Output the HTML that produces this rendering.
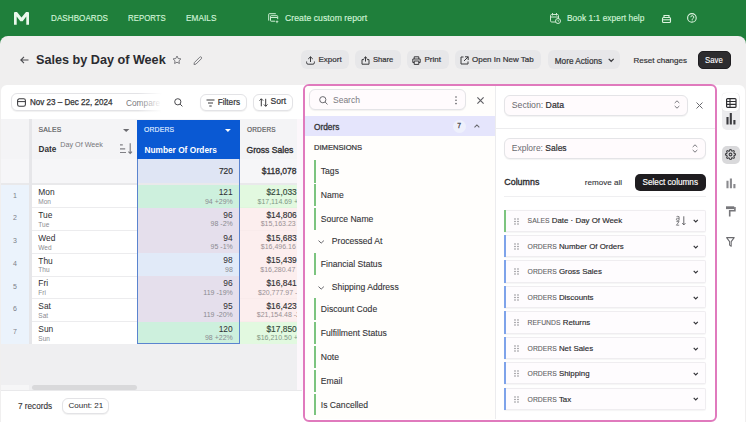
<!DOCTYPE html>
<html><head><meta charset="utf-8">
<style>
*{box-sizing:border-box;margin:0;padding:0}
html,body{width:746px;height:422px;overflow:hidden;background:#1f7f3b;font-family:"Liberation Sans",sans-serif;color:#2e2e31}
.a{position:absolute;white-space:nowrap;transform-origin:0 0}
svg{position:absolute;overflow:visible}
#hdr{position:absolute;left:0;top:0;width:746px;height:36px;background:#1f7f3b}
.nav{color:#d2f4d8;font-size:8px;letter-spacing:0.05px;-webkit-text-stroke:0.15px #d2f4d8}
#main{position:absolute;left:0;top:36px;width:746px;height:386px;background:#f0efef;border-radius:8px 8px 0 0}
.btn{position:absolute;height:19px;border-radius:6px;background:#e7e7e9}
.bt{font-size:8px;color:#333336;-webkit-text-stroke:0.2px #333336}
#panel{position:absolute;left:1.4px;top:85px;width:743.2px;height:337px;background:#fff;border-radius:6px 6px 0 0}
.pill{position:absolute;border:1px solid #e3e3e6;border-radius:6px;background:#fff;box-shadow:0 1px 1px rgba(0,0,0,0.06)}
.th{background:#f4f4f6}
.cap{font-size:6.8px;color:#5c5c61;letter-spacing:0.2px;-webkit-text-stroke:0.2px currentColor}
.num{font-size:8px;color:#2e2e31;text-align:right}
.sub{font-size:6px;color:#8a8a90}
.li{font-size:8.6px;color:#333336;-webkit-text-stroke:0.1px currentColor}
.gbar{position:absolute;left:314px;width:2px;background:#7cc47f}
.card{position:absolute;left:504px;width:201.5px;height:22.3px;border:1px solid #efedf0;border-left:none;background:#fefcfe;border-radius:0 2px 2px 0;box-shadow:0 0.5px 1px rgba(0,0,0,0.04)}
.card .bar{position:absolute;left:0;top:-1px;bottom:-1px;width:2px;background:#7ea3ea}
.ck{font-size:6.8px;color:#5f5f64;-webkit-text-stroke:0.1px currentColor}
.cv{font-size:7.9px;color:#2b2b2e;-webkit-text-stroke:0.15px currentColor}
</style></head><body>
<div id="hdr">
  <!-- M logo -->
  <svg style="left:14.3px;top:12px" width="15" height="13" viewBox="0 0 15 13"><path d="M0 12.8V1Q0 0 1 0H3L7.5 5.6 12 0H14Q15 0 15 1V12.8H12.3V4.4L8.7 9.3H6.3L2.7 4.4V12.8Z" fill="#eaf8ec"/></svg>
  <div class="a nav" style="left:50.7px;top:12.5px;font-size:8.6px;transform:scaleX(0.94)">DASHBOARDS</div>
  <div class="a nav" style="left:127.7px;top:12.5px;font-size:8.6px;transform:scaleX(0.905)">REPORTS</div>
  <div class="a nav" style="left:185.6px;top:12.5px;font-size:8.6px;transform:scaleX(0.96)">EMAILS</div>
  <svg style="left:268px;top:13px" width="12" height="11" viewBox="0 0 12 11"><path d="M0.7 7.6V1.3Q0.7 0.7 1.3 0.7H7.8" fill="none" stroke="#cfeed5" stroke-width="1"/><path d="M7 8.2H3.1Q2.5 8.2 2.5 7.6V3.3Q2.5 2.7 3.1 2.7H9.1Q9.7 2.7 9.7 3.3V6.2" fill="none" stroke="#cfeed5" stroke-width="1"/><path d="M2.5 4.5H9.7" stroke="#cfeed5" stroke-width="1"/><path d="M9 6.9L9.5 8.2 10.8 8.7 9.5 9.2 9 10.5 8.5 9.2 7.2 8.7 8.5 8.2z" fill="#d6f3db"/></svg>
  <div class="a nav" style="left:284.5px;top:12.5px;font-size:8.9px;transform:scaleX(0.975)">Create custom report</div>
  <svg style="left:550px;top:13px" width="11" height="11" viewBox="0 0 11 11"><rect x="0.5" y="1.5" width="8" height="7.5" rx="1.2" fill="none" stroke="#cfe9d2" stroke-width="1"/><path d="M0.5 4h8M2.5 0v2.5M6.5 0v2.5" stroke="#cfe9d2" stroke-width="1"/><circle cx="8" cy="8" r="2.5" fill="#1f7f3b" stroke="#cfe9d2" stroke-width="1"/><path d="M8 6.8v1.3h1" stroke="#cfe9d2" stroke-width="0.8" fill="none"/></svg>
  <div class="a nav" style="left:566.6px;top:13px;font-size:8.6px;transform:scaleX(0.97)">Book 1:1 expert help</div>
  <svg style="left:662px;top:14px" width="9" height="9" viewBox="0 0 9 9"><rect x="0.5" y="3.5" width="8" height="5" rx="1" fill="none" stroke="#dcf3df" stroke-width="1.1"/><path d="M2 3.5V1.5h5v2" fill="none" stroke="#dcf3df" stroke-width="1.1"/><path d="M0.5 5.8h8" stroke="#dcf3df" stroke-width="1"/></svg>
  <svg style="left:686.5px;top:13.2px" width="11" height="11" viewBox="0 0 11 11"><circle cx="4.9" cy="4.9" r="4.3" fill="none" stroke="#dcf3df" stroke-width="1.1"/><path d="M3.8 4.2a1.5 1.5 0 1 1 2 1.4c-0.5 0.2-0.6 0.5-0.6 1v0.3" fill="none" stroke="#dcf3df" stroke-width="1"/><circle cx="5.2" cy="8" r="0.6" fill="#dcf3df"/></svg>
</div>

<div id="main"></div>

  <!-- title row (coords relative to main: subtract 36) -->
  <svg style="left:20px;top:56px" width="9" height="8" viewBox="0 0 9 8"><path d="M8.5 4H1M4 0.8L0.8 4 4 7.2" fill="none" stroke="#4a4a4e" stroke-width="1.1"/></svg>
  <div class="a" style="left:36px;top:52px;font-size:13.3px;font-weight:700;color:#2b2b2f;transform:scaleX(0.95)">Sales by Day of Week</div>
  <svg style="left:172.3px;top:55.2px" width="10" height="10" viewBox="0 0 24 24"><path d="M12 2.5l2.9 5.9 6.5 0.95-4.7 4.6 1.1 6.45L12 17.3l-5.8 3.1 1.1-6.45-4.7-4.6 6.5-0.95z" fill="none" stroke="#5e5e63" stroke-width="1.9" stroke-linejoin="round"/></svg>
  <svg style="left:192.8px;top:55.6px" width="9.5" height="9.5" viewBox="0 0 24 24"><path d="M17 3a2.83 2.83 0 1 1 4 4L7.5 20.5 2.5 21.5l1-5L17 3z" fill="none" stroke="#6a6a6f" stroke-width="2.2" stroke-linejoin="round"/></svg>

  <div class="btn" style="left:301px;top:50px;width:48px"></div>
  <svg style="left:306px;top:56px" width="9" height="9" viewBox="0 0 9 9"><path d="M4.5 6V0.8M2.2 3L4.5 0.8 6.8 3M0.6 5.5v1.2a1.5 1.5 0 0 0 1.5 1.5h4.8a1.5 1.5 0 0 0 1.5-1.5V5.5" fill="none" stroke="#3a3a3d" stroke-width="1"/></svg>
  <div class="a bt" style="left:318.5px;top:55.4px">Export</div>
  <div class="btn" style="left:355px;top:50px;width:46px"></div>
  <svg style="left:361px;top:56px" width="9" height="9" viewBox="0 0 9 9"><path d="M2.9 3.6H1v4.6h7V3.6H6.1M4.5 5.6V0.9M2.7 2.6L4.5 0.9 6.3 2.6" fill="none" stroke="#3a3a3d" stroke-width="1"/></svg>
  <div class="a bt" style="left:373px;top:55.4px;font-size:7.6px">Share</div>
  <div class="btn" style="left:407px;top:50px;width:42px"></div>
  <svg style="left:412px;top:56px" width="9" height="9" viewBox="0 0 9 9"><path d="M2.2 3V0.8h4.6V3M2.2 6.5H0.8V3h7.4v3.5H6.8M2.2 5h4.6v3.4H2.2z" fill="none" stroke="#3a3a3d" stroke-width="1"/></svg>
  <div class="a bt" style="left:424.5px;top:55.4px">Print</div>
  <div class="btn" style="left:455px;top:50px;width:86px"></div>
  <svg style="left:460px;top:56px" width="9" height="9" viewBox="0 0 9 9"><path d="M3.5 1H1v7h7V5.5M5 0.8h3.2V4M8.2 0.8L4 5" fill="none" stroke="#3a3a3d" stroke-width="1"/></svg>
  <div class="a bt" style="left:472px;top:55.4px">Open In New Tab</div>
  <div class="btn" style="left:548px;top:50px;width:72px"></div>
  <div class="a bt" style="left:554.8px;top:56.7px;font-size:8.2px">More Actions</div>
  <svg style="left:608.2px;top:58.3px" width="7" height="5" viewBox="0 0 7 5"><path d="M0.7 0.9L3.2 3.3 5.7 0.9" fill="none" stroke="#3a3a3d" stroke-width="1.2"/></svg>
  <div class="a bt" style="left:633.6px;top:55.6px">Reset changes</div>
  <div class="btn" style="left:697.5px;top:51px;width:33.5px;height:17.5px;background:#2d2c2f;border:1px solid #1e1d20;border-radius:5px"></div>
  <div class="a" style="left:704.9px;top:55.3px;font-size:8.4px;color:#fff;-webkit-text-stroke:0.1px #fff;transform:scaleX(0.93)">Save</div>

<div id="panel"></div>
<!-- date bar -->
<div class="pill" style="left:11px;top:93px;width:155px;height:18px"></div>
<svg style="left:16.5px;top:97.5px" width="9" height="9" viewBox="0 0 9 9"><rect x="0.6" y="0.8" width="7.8" height="7.4" rx="1.8" fill="none" stroke="#3a3a3d" stroke-width="1.05"/><path d="M0.6 3.6h7.8" stroke="#3a3a3d" stroke-width="1"/></svg>
<div class="a" style="left:29.8px;top:97px;font-size:8.5px;color:#323235;-webkit-text-stroke:0.25px #323235;transform:scaleX(0.948)">Nov 23 – Dec 22, 2024</div>
<div class="a" style="left:126px;top:97.5px;font-size:8.3px;color:#77777c;width:36px;overflow:hidden">Compare</div>
<div class="a" style="left:138px;top:92px;width:30px;height:21px;background:linear-gradient(90deg,rgba(255,255,255,0),#fff 80%)"></div>
<svg style="left:174px;top:98px" width="9" height="9" viewBox="0 0 9 9"><circle cx="3.8" cy="3.8" r="3.1" fill="none" stroke="#4a4a4e" stroke-width="1"/><path d="M6.1 6.1L8.4 8.4" stroke="#4a4a4e" stroke-width="1"/></svg>
<div class="pill" style="left:200px;top:94px;width:47px;height:17px"></div>
<svg style="left:205.5px;top:98.5px" width="9" height="8" viewBox="0 0 9 8"><path d="M0.5 1h8M2 4h5M3.3 7h2.4" stroke="#3a3a3d" stroke-width="1"/></svg>
<div class="a bt" style="left:217.7px;top:98.2px;font-size:8.2px">Filters</div>
<div class="pill" style="left:253px;top:94px;width:40px;height:17px"></div>
<svg style="left:259px;top:98px" width="9" height="9" viewBox="0 0 9 9"><path d="M2.3 8.3V0.8M0.5 2.6L2.3 0.8 4.1 2.6M6.7 0.8v7.5M4.9 6.5l1.8 1.8 1.8-1.8" fill="none" stroke="#3a3a3d" stroke-width="1"/></svg>
<div class="a bt" style="left:270.5px;top:96.2px;font-size:8.5px">Sort</div>

<!-- table -->
<div class="a th" style="left:1px;top:119px;width:301px;height:64px"></div>
<div class="a" style="left:1px;top:159px;width:301px;height:24px;background:#f6f6f8"></div>
<div class="a" style="left:1px;top:183px;width:301px;height:2px;background:#e9e9eb"></div>
<div class="a" style="left:29px;top:119px;width:2.5px;height:225px;background:#e6e6e9"></div>
<div class="a" style="left:1px;top:185px;width:28px;height:159px;background:#ebf3fc"></div>
<div class="a" style="left:1px;top:344px;width:301px;height:46px;background:#efeff1"></div>
<div class="a" style="left:1px;top:385px;width:28px;height:5px;background:#f6f6f7"></div>
<div class="a" style="left:32px;top:385px;width:105px;height:5px;border-radius:3px;background:#d9d9db"></div>
<div class="a" style="left:1px;top:390px;width:301px;height:1px;background:#e9e9eb"></div>
<div class="a" style="left:31.5px;top:185px;width:106px;height:159px;background:#fff"></div>

<div class="a cap" style="left:38.5px;top:125.8px">SALES</div>
<svg style="left:123px;top:129px" width="7" height="3" viewBox="0 0 7 3"><path d="M0 0h6.4L3.2 3z" fill="#6b6b70"/></svg>
<div class="a" style="left:38.5px;top:145.3px;font-size:8.2px;font-weight:700;color:#323235">Date</div>
<div class="a" style="left:60.3px;top:140px;font-size:7.2px;color:#76767b">Day Of Week</div>
<svg style="left:120px;top:143px" width="13" height="12" viewBox="0 0 13 12"><path d="M0 1.8h2.8M0 5.8h5.2M0 9.5h6" stroke="#808085" stroke-width="1.2"/><path d="M10.2 0.2v10.2M8.4 8.6l1.8 1.8 1.8-1.8" fill="none" stroke="#78787d" stroke-width="1.1"/></svg>

<div class="a" style="left:137px;top:120px;width:103px;height:39px;background:#0a59d3"></div>
<div class="a cap" style="left:144px;top:125.5px;color:#dde8ff">ORDERS</div>
<svg style="left:225px;top:129px" width="6" height="3" viewBox="0 0 6 3"><path d="M0 0h5.8L2.9 3z" fill="#fff"/></svg>
<div class="a" style="left:144.5px;top:145px;font-size:8.3px;font-weight:700;color:#fff">Number Of Orders</div>
<div class="a" style="left:137px;top:159px;width:103px;height:24px;background:#dfe5f4;border-left:1px solid #5a84cf;border-right:1px solid #5a84cf"></div>
<div class="a num" style="left:200px;top:165.8px;width:32.8px;font-size:8.3px;-webkit-text-stroke:0.2px currentColor">720</div>

<div class="a cap" style="left:246.5px;top:125.5px;transform:scaleX(0.95)">ORDERS</div>
<div class="a" style="left:246.5px;top:144.8px;font-size:8.6px;color:#2e2e31;-webkit-text-stroke:0.35px #2e2e31">Gross Sales</div>
<div class="a num" style="left:250px;top:166.3px;width:46.5px;font-size:8.5px;-webkit-text-stroke:0.3px #2e2e31">$118,078</div>
<div class="a" style="left:137px;top:185.00px;width:103px;height:22.75px;background:#cdf0dd"></div>
<div class="a" style="left:240px;top:185.00px;width:57px;height:22.75px;background:#e2f9e0"></div>
<div class="a" style="left:31.5px;top:207.25px;width:106px;height:0.75px;background:#ececee"></div>
<div class="a" style="left:240px;top:207.25px;width:57px;height:0.75px;background:rgba(0,0,0,0.01)"></div>
<div class="a" style="left:1px;top:191.50px;width:28px;text-align:center;font-size:7px;color:#7b7f88">1</div>
<div class="a" style="left:38.3px;top:187.30px;font-size:8.4px;color:#2e2e31">Mon</div>
<div class="a sub" style="left:38.3px;top:198.20px;font-size:6.5px">Mon</div>
<div class="a num" style="left:180px;top:187.20px;width:52.7px;font-size:8.4px">121</div>
<div class="a sub" style="left:150px;top:197.50px;width:82.8px;text-align:right;font-size:7px">94 +29%</div>
<div class="a" style="left:240px;top:185.00px;width:57px;height:22px;overflow:hidden"><div class="a" style="right:0.3px;top:2.2px;font-size:8.4px;color:#34493a;-webkit-text-stroke:0.15px #34493a">$21,033</div><div class="a" style="left:17.5px;top:12.5px;font-size:7px;color:#7f9884">$17,114.69 +23%</div></div>
<div class="a" style="left:137px;top:207.75px;width:103px;height:22.75px;background:#e5dfec"></div>
<div class="a" style="left:240px;top:207.75px;width:57px;height:22.75px;background:#fceeee"></div>
<div class="a" style="left:31.5px;top:230.00px;width:106px;height:0.75px;background:#ececee"></div>
<div class="a" style="left:240px;top:230.00px;width:57px;height:0.75px;background:rgba(0,0,0,0.01)"></div>
<div class="a" style="left:1px;top:214.25px;width:28px;text-align:center;font-size:7px;color:#7b7f88">2</div>
<div class="a" style="left:38.3px;top:210.05px;font-size:8.4px;color:#2e2e31">Tue</div>
<div class="a sub" style="left:38.3px;top:220.95px;font-size:6.5px">Tue</div>
<div class="a num" style="left:180px;top:209.95px;width:52.7px;font-size:8.4px">96</div>
<div class="a sub" style="left:150px;top:220.25px;width:82.8px;text-align:right;font-size:7px">98 -2%</div>
<div class="a" style="left:240px;top:207.75px;width:57px;height:22px;overflow:hidden"><div class="a" style="right:0.3px;top:2.2px;font-size:8.4px;color:#323235;-webkit-text-stroke:0.15px #323235">$14,806</div><div class="a" style="left:20.7px;top:12.5px;font-size:7px;color:#9a9094">$15,163.23 -2%</div></div>
<div class="a" style="left:137px;top:230.50px;width:103px;height:22.75px;background:#e5dfec"></div>
<div class="a" style="left:240px;top:230.50px;width:57px;height:22.75px;background:#fceeee"></div>
<div class="a" style="left:31.5px;top:252.75px;width:106px;height:0.75px;background:#ececee"></div>
<div class="a" style="left:240px;top:252.75px;width:57px;height:0.75px;background:rgba(0,0,0,0.01)"></div>
<div class="a" style="left:1px;top:237.00px;width:28px;text-align:center;font-size:7px;color:#7b7f88">3</div>
<div class="a" style="left:38.3px;top:232.80px;font-size:8.4px;color:#2e2e31">Wed</div>
<div class="a sub" style="left:38.3px;top:243.70px;font-size:6.5px">Wed</div>
<div class="a num" style="left:180px;top:232.70px;width:52.7px;font-size:8.4px">94</div>
<div class="a sub" style="left:150px;top:243.00px;width:82.8px;text-align:right;font-size:7px">95 -1%</div>
<div class="a" style="left:240px;top:230.50px;width:57px;height:22px;overflow:hidden"><div class="a" style="right:0.3px;top:2.2px;font-size:8.4px;color:#323235;-webkit-text-stroke:0.15px #323235">$15,683</div><div class="a" style="left:20.8px;top:12.5px;font-size:7px;color:#9a9094">$16,496.16 -5%</div></div>
<div class="a" style="left:137px;top:253.25px;width:103px;height:22.75px;background:#e1eaf8"></div>
<div class="a" style="left:240px;top:253.25px;width:57px;height:22.75px;background:#fceeee"></div>
<div class="a" style="left:31.5px;top:275.50px;width:106px;height:0.75px;background:#ececee"></div>
<div class="a" style="left:240px;top:275.50px;width:57px;height:0.75px;background:rgba(0,0,0,0.01)"></div>
<div class="a" style="left:1px;top:259.75px;width:28px;text-align:center;font-size:7px;color:#7b7f88">4</div>
<div class="a" style="left:38.3px;top:255.55px;font-size:8.4px;color:#2e2e31">Thu</div>
<div class="a sub" style="left:38.3px;top:266.45px;font-size:6.5px">Thu</div>
<div class="a num" style="left:180px;top:255.45px;width:52.7px;font-size:8.4px">98</div>
<div class="a sub" style="left:150px;top:265.75px;width:82.8px;text-align:right;font-size:7px">98</div>
<div class="a" style="left:240px;top:253.25px;width:57px;height:22px;overflow:hidden"><div class="a" style="right:0.3px;top:2.2px;font-size:8.4px;color:#323235;-webkit-text-stroke:0.15px #323235">$15,439</div><div class="a" style="left:20.3px;top:12.5px;font-size:7px;color:#9a9094">$16,280.47 -5%</div></div>
<div class="a" style="left:137px;top:276.00px;width:103px;height:22.75px;background:#e5dfec"></div>
<div class="a" style="left:240px;top:276.00px;width:57px;height:22.75px;background:#fceeee"></div>
<div class="a" style="left:31.5px;top:298.25px;width:106px;height:0.75px;background:#ececee"></div>
<div class="a" style="left:240px;top:298.25px;width:57px;height:0.75px;background:rgba(0,0,0,0.01)"></div>
<div class="a" style="left:1px;top:282.50px;width:28px;text-align:center;font-size:7px;color:#7b7f88">5</div>
<div class="a" style="left:38.3px;top:278.30px;font-size:8.4px;color:#2e2e31">Fri</div>
<div class="a sub" style="left:38.3px;top:289.20px;font-size:6.5px">Fri</div>
<div class="a num" style="left:180px;top:278.20px;width:52.7px;font-size:8.4px">96</div>
<div class="a sub" style="left:150px;top:288.50px;width:82.8px;text-align:right;font-size:7px">119 -19%</div>
<div class="a" style="left:240px;top:276.00px;width:57px;height:22px;overflow:hidden"><div class="a" style="right:0.3px;top:2.2px;font-size:8.4px;color:#323235;-webkit-text-stroke:0.15px #323235">$16,841</div><div class="a" style="left:18.0px;top:12.5px;font-size:7px;color:#9a9094">$20,777.97 -19%</div></div>
<div class="a" style="left:137px;top:298.75px;width:103px;height:22.75px;background:#e5dfec"></div>
<div class="a" style="left:240px;top:298.75px;width:57px;height:22.75px;background:#fceeee"></div>
<div class="a" style="left:31.5px;top:321.00px;width:106px;height:0.75px;background:#ececee"></div>
<div class="a" style="left:240px;top:321.00px;width:57px;height:0.75px;background:rgba(0,0,0,0.01)"></div>
<div class="a" style="left:1px;top:305.25px;width:28px;text-align:center;font-size:7px;color:#7b7f88">6</div>
<div class="a" style="left:38.3px;top:301.05px;font-size:8.4px;color:#2e2e31">Sat</div>
<div class="a sub" style="left:38.3px;top:311.95px;font-size:6.5px">Sat</div>
<div class="a num" style="left:180px;top:300.95px;width:52.7px;font-size:8.4px">95</div>
<div class="a sub" style="left:150px;top:311.25px;width:82.8px;text-align:right;font-size:7px">119 -20%</div>
<div class="a" style="left:240px;top:298.75px;width:57px;height:22px;overflow:hidden"><div class="a" style="right:0.3px;top:2.2px;font-size:8.4px;color:#323235;-webkit-text-stroke:0.15px #323235">$16,423</div><div class="a" style="left:16.8px;top:12.5px;font-size:7px;color:#9a9094">$21,154.48 -22%</div></div>
<div class="a" style="left:137px;top:321.50px;width:103px;height:22.75px;background:#cdf0dd"></div>
<div class="a" style="left:240px;top:321.50px;width:57px;height:22.75px;background:#e2f9e0"></div>
<div class="a" style="left:1px;top:328.00px;width:28px;text-align:center;font-size:7px;color:#7b7f88">7</div>
<div class="a" style="left:38.3px;top:323.80px;font-size:8.4px;color:#2e2e31">Sun</div>
<div class="a sub" style="left:38.3px;top:334.70px;font-size:6.5px">Sun</div>
<div class="a num" style="left:180px;top:323.70px;width:52.7px;font-size:8.4px">120</div>
<div class="a sub" style="left:150px;top:334.00px;width:82.8px;text-align:right;font-size:7px">98 +22%</div>
<div class="a" style="left:240px;top:321.50px;width:57px;height:22px;overflow:hidden"><div class="a" style="right:0.3px;top:2.2px;font-size:8.4px;color:#34493a;-webkit-text-stroke:0.15px #34493a">$17,850</div><div class="a" style="left:16.8px;top:12.5px;font-size:7px;color:#7f9884">$16,210.50 +10%</div></div>
<div class="a" style="left:137px;top:159px;width:103px;height:185.25px;border:1px solid #5a84cf;border-top:none"></div>
<div class="a" style="left:297px;top:119px;width:6px;height:271px;background:#fcf7fb"></div>
<div class="a" style="left:18px;top:401.5px;font-size:8.2px;color:#333336;-webkit-text-stroke:0.12px currentColor">7 records</div>
<div class="pill" style="left:62px;top:398px;width:47px;height:16px"></div>
<div class="a" style="left:68.5px;top:400.5px;font-size:8px;color:#333336;-webkit-text-stroke:0.05px currentColor">Count: 21</div>

<!-- pink overlay panel -->
<div class="a" style="left:302.7px;top:83.5px;width:414.8px;height:338px;background:#fff;border:2px solid #e07abd;border-radius:6px"></div>
<div class="a" style="left:304.5px;top:85.5px;width:190px;height:333.5px;background:#fffefc;border-radius:4px 0 0 4px"></div>
<div class="a" style="left:494.5px;top:85.5px;width:1px;height:333.5px;background:#ececee"></div>
<div class="a" style="left:309px;top:89.2px;width:157.2px;height:21.2px;border:1px solid #e4e4e7;border-radius:6px;background:#fffbfd;box-shadow:0 1px 1px rgba(0,0,0,0.05)"></div>
<svg style="left:318.5px;top:96px" width="10" height="9" viewBox="0 0 10 9"><circle cx="3.8" cy="3.7" r="3.1" fill="none" stroke="#6a6a6f" stroke-width="1"/><path d="M6.1 6L8.5 8.4" stroke="#6a6a6f" stroke-width="1"/></svg>
<div class="a" style="left:333px;top:95px;font-size:8.5px;color:#7a7a7f">Search</div>
<svg style="left:455px;top:96px" width="2" height="9" viewBox="0 0 2 9"><circle cx="1" cy="1" r="0.8" fill="#5a5a5f"/><circle cx="1" cy="4.3" r="0.8" fill="#5a5a5f"/><circle cx="1" cy="7.6" r="0.8" fill="#5a5a5f"/></svg>
<svg style="left:476.8px;top:96.8px" width="7" height="7" viewBox="0 0 7 7"><path d="M0.4 0.4l6.2 6.2M6.6 0.4l-6.2 6.2" stroke="#5f5f64" stroke-width="1.15"/></svg>
<div class="a" style="left:304.5px;top:116.2px;width:190px;height:19.4px;background:#e5e5fc"></div>
<div class="a" style="left:314px;top:122.3px;font-size:8.3px;color:#36363a;-webkit-text-stroke:0.32px #36363a">Orders</div>
<div class="a" style="left:453px;top:120.3px;width:12.5px;height:12.5px;border-radius:7px;background:#eef0fc"></div>
<div class="a" style="left:457.3px;top:122.3px;font-size:6.8px;color:#4a4a50;-webkit-text-stroke:0.3px #4a4a50">7</div>
<svg style="left:474.3px;top:124.2px" width="6" height="4" viewBox="0 0 6 4"><path d="M0.5 3.3L2.9 0.9 5.3 3.3" fill="none" stroke="#66666b" stroke-width="1.05"/></svg>
<div class="a" style="left:314px;top:143px;font-size:7.6px;color:#36363a;-webkit-text-stroke:0.22px #36363a">DIMENSIONS</div>
<div class="gbar" style="top:160.2px;height:22.8px"></div>
<div class="a li" style="left:320.8px;top:166.2px">Tags</div>
<div class="gbar" style="top:184.2px;height:21.8px"></div>
<div class="a li" style="left:320.8px;top:190.2px">Name</div>
<div class="gbar" style="top:207.6px;height:22.1px"></div>
<div class="a li" style="left:320.8px;top:213.6px">Source Name</div>
<svg style="left:317.6px;top:240.2px" width="7" height="4" viewBox="0 0 7 4"><path d="M0.5 0.6L3.2 3.1 5.9 0.6" fill="none" stroke="#66666b" stroke-width="1"/></svg>
<div class="a li" style="left:331.8px;top:235.7px">Processed At</div>
<div class="gbar" style="top:252.6px;height:22.6px"></div>
<div class="a li" style="left:320.8px;top:258.6px">Financial Status</div>
<svg style="left:317.6px;top:286.3px" width="7" height="4" viewBox="0 0 7 4"><path d="M0.5 0.6L3.2 3.1 5.9 0.6" fill="none" stroke="#66666b" stroke-width="1"/></svg>
<div class="a li" style="left:331.8px;top:282px">Shipping Address</div>
<div class="gbar" style="top:298px;height:22.4px"></div>
<div class="a li" style="left:320.8px;top:304.0px">Discount Code</div>
<div class="gbar" style="top:322px;height:22.2px"></div>
<div class="a li" style="left:320.8px;top:328.0px">Fulfillment Status</div>
<div class="gbar" style="top:345.7px;height:22.5px"></div>
<div class="a li" style="left:320.8px;top:351.7px">Note</div>
<div class="gbar" style="top:369.7px;height:22.5px"></div>
<div class="a li" style="left:320.8px;top:375.7px">Email</div>
<div class="gbar" style="top:393.7px;height:21.8px"></div>
<div class="a li" style="left:320.8px;top:399.7px">Is Cancelled</div>

<!-- right settings panel -->
<div class="a" style="left:504px;top:94.5px;width:184px;height:21px;border:1px solid #e4e4e7;border-radius:6px;background:#fffbfd;box-shadow:0 1px 1px rgba(0,0,0,0.05)"></div>
<div class="a" style="left:511.8px;top:100px;font-size:8.7px;color:#2e2e31"><span style="color:#6a6a6f">Section:</span> <span style="-webkit-text-stroke:0.2px #2e2e31">Data</span></div>
<svg style="left:674px;top:100px" width="6" height="9" viewBox="0 0 6 9"><path d="M0.7 3L3 0.8 5.3 3M0.7 6L3 8.2 5.3 6" fill="none" stroke="#6a6a6f" stroke-width="0.9"/></svg>
<svg style="left:696px;top:101.5px" width="7" height="7" viewBox="0 0 7 7"><path d="M0.5 0.5l6 6M6.5 0.5l-6 6" stroke="#6a6a6f" stroke-width="1"/></svg>
<div class="a" style="left:495.5px;top:128px;width:219.5px;height:1px;background:#ececee"></div>
<div class="a" style="left:504px;top:138px;width:201.5px;height:20.6px;border:1px solid #e4e4e7;border-radius:6px;background:#fffbfd;box-shadow:0 1px 1px rgba(0,0,0,0.05)"></div>
<div class="a" style="left:511.8px;top:143px;font-size:8.5px;color:#2e2e31"><span style="color:#6a6a6f">Explore:</span> <span style="-webkit-text-stroke:0.2px #2e2e31">Sales</span></div>
<svg style="left:692px;top:143.5px" width="6" height="9" viewBox="0 0 6 9"><path d="M0.7 3L3 0.8 5.3 3M0.7 6L3 8.2 5.3 6" fill="none" stroke="#6a6a6f" stroke-width="0.9"/></svg>
<div class="a" style="left:504.3px;top:177.3px;font-size:8.9px;color:#2e2e31;-webkit-text-stroke:0.35px #2e2e31">Columns</div>
<div class="a" style="left:584.7px;top:178.2px;font-size:8.1px;color:#38383c;-webkit-text-stroke:0.12px currentColor">remove all</div>
<div class="a" style="left:634.5px;top:173.5px;width:71px;height:17.5px;border-radius:5px;background:#1f1d20"></div>
<div class="a" style="left:642.5px;top:178px;font-size:8.2px;color:#fff;-webkit-text-stroke:0.15px #fff">Select columns</div>
<div class="a" style="left:504px;top:196px;width:201.5px;height:1px;background:#efeff1"></div>
<div class="card" style="top:209.60px"><div class="bar" style="background:#7cc47f"></div></div>
<svg style="left:513.8px;top:217.60px" width="5" height="7" viewBox="0 0 5 7"><circle cx="1" cy="1" r="0.65" fill="#707075"/><circle cx="4" cy="1" r="0.65" fill="#707075"/><circle cx="1" cy="3.5" r="0.65" fill="#707075"/><circle cx="4" cy="3.5" r="0.65" fill="#707075"/><circle cx="1" cy="6" r="0.65" fill="#707075"/><circle cx="4" cy="6" r="0.65" fill="#707075"/></svg>
<div class="a" style="font-size:8px;line-height:10px;left:527.6px;top:216.10px"><span class="ck">SALES</span> <span class="cv">Date · Day Of Week</span></div>
<svg style="left:692.8px;top:219.40px" width="6" height="4" viewBox="0 0 6 4"><path d="M0.7 0.8L2.75 2.9 4.8 0.8" fill="none" stroke="#333337" stroke-width="1.15"/></svg>
<svg style="left:676px;top:216px" width="4" height="10" viewBox="0 0 4 10"><path d="M0.5 0.7Q1.8 -0.1 3.1 0.7V4.3M3.1 2.3H1.3Q0.4 2.3 0.4 3.3 0.4 4.3 1.3 4.3H3.1M0.4 5.6H3.1L0.4 9.2H3.2" fill="none" stroke="#77777b" stroke-width="0.9"/></svg><svg style="left:682px;top:216px" width="4" height="10" viewBox="0 0 4 10"><path d="M1.8 0.3v8.6M0.2 7.2L1.8 8.9 3.4 7.2" fill="none" stroke="#5f5f63" stroke-width="0.95"/></svg>
<div class="card" style="top:235.03px"><div class="bar" style="background:#7ea3ea"></div></div>
<svg style="left:513.8px;top:243.03px" width="5" height="7" viewBox="0 0 5 7"><circle cx="1" cy="1" r="0.65" fill="#707075"/><circle cx="4" cy="1" r="0.65" fill="#707075"/><circle cx="1" cy="3.5" r="0.65" fill="#707075"/><circle cx="4" cy="3.5" r="0.65" fill="#707075"/><circle cx="1" cy="6" r="0.65" fill="#707075"/><circle cx="4" cy="6" r="0.65" fill="#707075"/></svg>
<div class="a" style="font-size:8px;line-height:10px;left:527.6px;top:242.03px"><span class="ck">ORDERS</span> <span class="cv">Number Of Orders</span></div>
<svg style="left:692.8px;top:244.83px" width="6" height="4" viewBox="0 0 6 4"><path d="M0.7 0.8L2.75 2.9 4.8 0.8" fill="none" stroke="#333337" stroke-width="1.15"/></svg>
<div class="card" style="top:260.46px"><div class="bar" style="background:#7ea3ea"></div></div>
<svg style="left:513.8px;top:268.46px" width="5" height="7" viewBox="0 0 5 7"><circle cx="1" cy="1" r="0.65" fill="#707075"/><circle cx="4" cy="1" r="0.65" fill="#707075"/><circle cx="1" cy="3.5" r="0.65" fill="#707075"/><circle cx="4" cy="3.5" r="0.65" fill="#707075"/><circle cx="1" cy="6" r="0.65" fill="#707075"/><circle cx="4" cy="6" r="0.65" fill="#707075"/></svg>
<div class="a" style="font-size:8px;line-height:10px;left:527.6px;top:267.46px"><span class="ck">ORDERS</span> <span class="cv">Gross Sales</span></div>
<svg style="left:692.8px;top:270.26px" width="6" height="4" viewBox="0 0 6 4"><path d="M0.7 0.8L2.75 2.9 4.8 0.8" fill="none" stroke="#333337" stroke-width="1.15"/></svg>
<div class="card" style="top:285.89px"><div class="bar" style="background:#7ea3ea"></div></div>
<svg style="left:513.8px;top:293.89px" width="5" height="7" viewBox="0 0 5 7"><circle cx="1" cy="1" r="0.65" fill="#707075"/><circle cx="4" cy="1" r="0.65" fill="#707075"/><circle cx="1" cy="3.5" r="0.65" fill="#707075"/><circle cx="4" cy="3.5" r="0.65" fill="#707075"/><circle cx="1" cy="6" r="0.65" fill="#707075"/><circle cx="4" cy="6" r="0.65" fill="#707075"/></svg>
<div class="a" style="font-size:8px;line-height:10px;left:527.6px;top:292.89px"><span class="ck">ORDERS</span> <span class="cv">Discounts</span></div>
<svg style="left:692.8px;top:295.69px" width="6" height="4" viewBox="0 0 6 4"><path d="M0.7 0.8L2.75 2.9 4.8 0.8" fill="none" stroke="#333337" stroke-width="1.15"/></svg>
<div class="card" style="top:311.32px"><div class="bar" style="background:#7ea3ea"></div></div>
<svg style="left:513.8px;top:319.32px" width="5" height="7" viewBox="0 0 5 7"><circle cx="1" cy="1" r="0.65" fill="#707075"/><circle cx="4" cy="1" r="0.65" fill="#707075"/><circle cx="1" cy="3.5" r="0.65" fill="#707075"/><circle cx="4" cy="3.5" r="0.65" fill="#707075"/><circle cx="1" cy="6" r="0.65" fill="#707075"/><circle cx="4" cy="6" r="0.65" fill="#707075"/></svg>
<div class="a" style="font-size:8px;line-height:10px;left:527.6px;top:318.32px"><span class="ck">REFUNDS</span> <span class="cv">Returns</span></div>
<svg style="left:692.8px;top:321.12px" width="6" height="4" viewBox="0 0 6 4"><path d="M0.7 0.8L2.75 2.9 4.8 0.8" fill="none" stroke="#333337" stroke-width="1.15"/></svg>
<div class="card" style="top:336.75px"><div class="bar" style="background:#7ea3ea"></div></div>
<svg style="left:513.8px;top:344.75px" width="5" height="7" viewBox="0 0 5 7"><circle cx="1" cy="1" r="0.65" fill="#707075"/><circle cx="4" cy="1" r="0.65" fill="#707075"/><circle cx="1" cy="3.5" r="0.65" fill="#707075"/><circle cx="4" cy="3.5" r="0.65" fill="#707075"/><circle cx="1" cy="6" r="0.65" fill="#707075"/><circle cx="4" cy="6" r="0.65" fill="#707075"/></svg>
<div class="a" style="font-size:8px;line-height:10px;left:527.6px;top:343.75px"><span class="ck">ORDERS</span> <span class="cv">Net Sales</span></div>
<svg style="left:692.8px;top:346.55px" width="6" height="4" viewBox="0 0 6 4"><path d="M0.7 0.8L2.75 2.9 4.8 0.8" fill="none" stroke="#333337" stroke-width="1.15"/></svg>
<div class="card" style="top:362.18px"><div class="bar" style="background:#7ea3ea"></div></div>
<svg style="left:513.8px;top:370.18px" width="5" height="7" viewBox="0 0 5 7"><circle cx="1" cy="1" r="0.65" fill="#707075"/><circle cx="4" cy="1" r="0.65" fill="#707075"/><circle cx="1" cy="3.5" r="0.65" fill="#707075"/><circle cx="4" cy="3.5" r="0.65" fill="#707075"/><circle cx="1" cy="6" r="0.65" fill="#707075"/><circle cx="4" cy="6" r="0.65" fill="#707075"/></svg>
<div class="a" style="font-size:8px;line-height:10px;left:527.6px;top:369.18px"><span class="ck">ORDERS</span> <span class="cv">Shipping</span></div>
<svg style="left:692.8px;top:371.98px" width="6" height="4" viewBox="0 0 6 4"><path d="M0.7 0.8L2.75 2.9 4.8 0.8" fill="none" stroke="#333337" stroke-width="1.15"/></svg>
<div class="card" style="top:387.61px"><div class="bar" style="background:#7ea3ea"></div></div>
<svg style="left:513.8px;top:395.61px" width="5" height="7" viewBox="0 0 5 7"><circle cx="1" cy="1" r="0.65" fill="#707075"/><circle cx="4" cy="1" r="0.65" fill="#707075"/><circle cx="1" cy="3.5" r="0.65" fill="#707075"/><circle cx="4" cy="3.5" r="0.65" fill="#707075"/><circle cx="1" cy="6" r="0.65" fill="#707075"/><circle cx="4" cy="6" r="0.65" fill="#707075"/></svg>
<div class="a" style="font-size:8px;line-height:10px;left:527.6px;top:394.61px"><span class="ck">ORDERS</span> <span class="cv">Tax</span></div>
<svg style="left:692.8px;top:397.41px" width="6" height="4" viewBox="0 0 6 4"><path d="M0.7 0.8L2.75 2.9 4.8 0.8" fill="none" stroke="#333337" stroke-width="1.15"/></svg>

<!-- right rail -->
<div class="a" style="left:721.5px;top:92.5px;width:18px;height:37px;border-radius:5px;background:#ececee"></div>
<div class="a" style="left:722px;top:93px;width:17px;height:18px;border-radius:4px;background:#fff;box-shadow:0 0 1px rgba(0,0,0,0.15)"></div>
<svg style="left:726px;top:98px" width="11" height="10" viewBox="0 0 11 10"><rect x="0.6" y="0.6" width="9.4" height="8.8" rx="1" fill="none" stroke="#2e2e31" stroke-width="1.2"/><path d="M0.6 3.5h9.4M0.6 6.4h9.4M4 0.6v8.8" stroke="#2e2e31" stroke-width="1.1"/></svg>
<svg style="left:726px;top:112px" width="11" height="13" viewBox="0 0 11 13"><path d="M1.5 12.5V5M4.8 12.5V1M8.4 12.5V8" stroke="#3a3a3e" stroke-width="2.1"/></svg>
<div class="a" style="left:721.5px;top:145.5px;width:18.5px;height:18px;border-radius:5px;background:#d9d9db"></div>
<svg style="left:725.3px;top:149.3px" width="11" height="11" viewBox="0 0 24 24"><path d="M12 15a3 3 0 1 0 0-6 3 3 0 0 0 0 6z" fill="none" stroke="#404044" stroke-width="2.4"/><path d="M19.4 15a1.65 1.65 0 0 0 .33 1.82l.06.06a2 2 0 1 1-2.830 2.830l-.06-.06a1.65 1.65 0 0 0-1.82-.33 1.65 1.65 0 0 0-1 1.51V21a2 2 0 1 1-4 0v-.09A1.65 1.65 0 0 0 9 19.4a1.65 1.65 0 0 0-1.82.33l-.06.06a2 2 0 1 1-2.83-2.83l.06-.06A1.65 1.65 0 0 0 4.68 15a1.65 1.65 0 0 0-1.51-1H3a2 2 0 1 1 0-4h.09A1.65 1.65 0 0 0 4.6 9a1.65 1.65 0 0 0-.33-1.82l-.06-.06a2 2 0 1 1 2.83-2.83l.06.06A1.65 1.65 0 0 0 9 4.68a1.65 1.65 0 0 0 1-1.51V3a2 2 0 1 1 4 0v.09a1.65 1.65 0 0 0 1 1.51 1.65 1.65 0 0 0 1.82-.33l.06-.06a2 2 0 1 1 2.83 2.83l-.06.06A1.65 1.65 0 0 0 19.4 9a1.65 1.65 0 0 0 1.51 1H21a2 2 0 1 1 0 4h-.09a1.65 1.65 0 0 0-1.51 1z" fill="none" stroke="#404044" stroke-width="2.4"/></svg>
<svg style="left:725.5px;top:178px" width="11" height="11" viewBox="0 0 11 11"><path d="M1.5 10.2V2.8M4.9 10.2V0.4M8.4 10.2V6" stroke="#8a8a8e" stroke-width="2.1"/></svg>
<svg style="left:726.3px;top:205.8px" width="10" height="11" viewBox="0 0 10 11"><path d="M0 0.3h8.2v2.8H0z" fill="#77777b"/><path d="M8.2 1.7h0.7v3H3.7v5.8" fill="none" stroke="#77777b" stroke-width="1.6"/></svg>
<svg style="left:726.3px;top:236.5px" width="9" height="10" viewBox="0 0 9 10"><path d="M0.6 0.6h7.6L5.2 4.6v4.6L3.6 8.1V4.6z" fill="none" stroke="#6a6a6e" stroke-width="1.05" stroke-linejoin="round"/></svg>
</body></html>
